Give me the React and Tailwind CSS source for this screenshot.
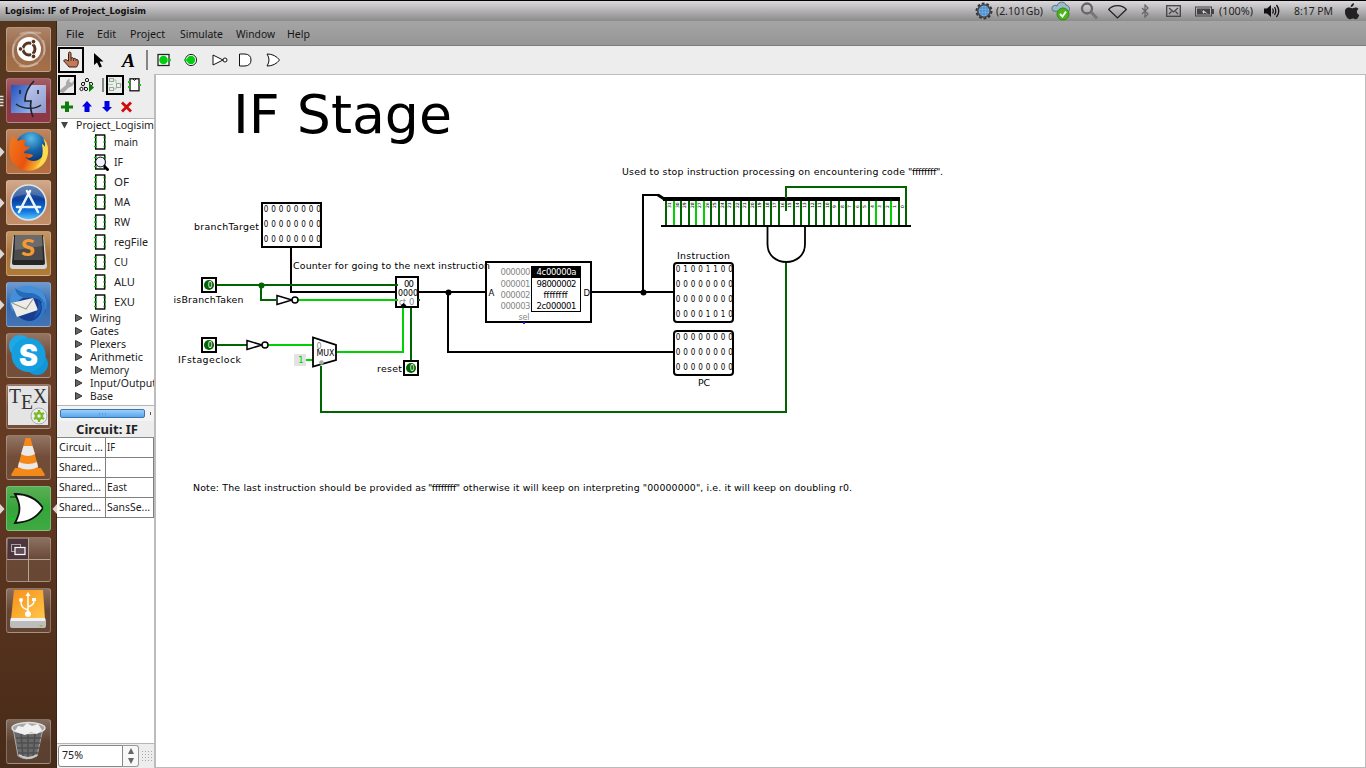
import React from "react";

/* ---------- dock ---------- */

function Tile({ bg, left, right, children }) {
  return (
    <div className="flex h-[45px] w-[57px] shrink-0 items-center">
      <div className="flex w-[6px] justify-start">
        {left === "arrow" && (
          <svg width="5" height="10" viewBox="0 0 5 10"><path d="M0 0L4.5 5L0 10Z" fill="#ddd8d3" /></svg>
        )}
        {left === "bars" && (
          <svg width="5" height="12" viewBox="0 0 5 12"><path d="M0 1.5H3.5M0 4.5H3.5M0 7.5H3.5M0 10.5H3.5" stroke="#e4e0dc" strokeWidth="1.6" /></svg>
        )}
      </div>
      <div className={`h-[45px] w-[45px] overflow-hidden rounded-[3px] border border-white/25 bg-linear-to-b ${bg}`}>{children}</div>
      <div className="flex w-[6px] justify-end">
        {right && (
          <svg width="5" height="10" viewBox="0 0 5 10"><path d="M5 0L0.5 5L5 10Z" fill="#ddd8d3" /></svg>
        )}
      </div>
    </div>
  );
}

const Art = ({ children }) => (
  <svg width="43" height="43" viewBox="0 0 43 43" className="block">{children}</svg>
);

const CLEAR = "from-white/30 via-white/10 to-white/10";

function Dock() {
  return (
    <aside className="flex w-[57px] shrink-0 flex-col gap-[6px] border-r border-[#3a2414] bg-linear-to-b from-[#54361f] via-[#683c24] to-[#482b19] pt-[6px]">
      <Tile bg="from-[#ad8468] via-[#98694a] to-[#a77047]">
        <Art>
          <g fill="none" stroke="#fff" strokeOpacity=".28" strokeWidth="2">
            <path d="M7 30C2 12 16 2 34 5" /><path d="M36 12C42 28 30 41 12 38" /><path d="M13 6C28 0 40 12 37 27" /><path d="M31 35C14 44 2 32 7 16" />
          </g>
          <circle cx="22" cy="21" r="12" fill="#fff" />
          <circle cx="22" cy="21" r="6" fill="none" stroke="#59351f" strokeWidth="3" />
          <path d="M22 21L12 21M22 21L27 12.5M22 21L27 29.5" stroke="#fff" strokeWidth="1.2" />
          <g fill="#59351f" stroke="#fff" strokeWidth=".9"><circle cx="13.5" cy="21" r="2.3" /><circle cx="26.5" cy="13.6" r="2.3" /><circle cx="26.5" cy="28.4" r="2.3" /></g>
        </Art>
      </Tile>
      <Tile bg="from-[#a65d66] via-[#8a3744] to-[#8d3846]" left="bars">
        <Art>
          <defs>
            <linearGradient id="fl" x1="0" y1="0" x2="1" y2="1"><stop offset="0" stopColor="#2450bd" /><stop offset="1" stopColor="#98b8ec" /></linearGradient>
            <linearGradient id="fr" x1="0" y1="0" x2="1" y2="1"><stop offset="0" stopColor="#c7d6f5" /><stop offset="1" stopColor="#8d97cc" /></linearGradient>
          </defs>
          <rect x="4" y="6" width="35" height="28" fill="url(#fr)" />
          <path d="M4 6H24C20 12 18 17 18 22H24L25 34H4Z" fill="url(#fl)" />
          <path d="M27 2C20 9 18 16 18 22H24C23 27 24 33 26 38" fill="none" stroke="#20242f" strokeWidth="1.7" />
          <path d="M9 25C15 30 28 31 34 26M13 11V15M31 11V15" fill="none" stroke="#20242f" strokeWidth="1.6" />
        </Art>
      </Tile>
      <Tile bg="from-[#bd8760] via-[#af6c41] to-[#b66f40]" left="arrow">
        <Art>
          <defs>
            <radialGradient id="globe" cx=".5" cy=".2" r=".8"><stop offset="0" stopColor="#58bce8" /><stop offset=".5" stopColor="#1763a7" /><stop offset="1" stopColor="#0a2c66" /></radialGradient>
            <linearGradient id="fox" x1="0" y1="0" x2="1" y2=".4"><stop offset="0" stopColor="#f47a1c" /><stop offset=".6" stopColor="#e8540f" /><stop offset="1" stopColor="#fcd03c" /></linearGradient>
          </defs>
          <circle cx="24" cy="18" r="16" fill="url(#globe)" />
          <path d="M5 7C8 7 10 9 11 11C14 9 18 10 20 10C17 12 17 14 18 16C20 17 22 16 23 17C22 20 17 20 17 23C20 24 22 23 26 25C24 29 20 28 18 27C21 31 29 33 34 28C38 24 36 18 35 14C37 15 38 17 38 18C39 14 37 10 36 8C42 13 43 24 38 32C31 43 15 43 8 35C1 28 1 16 5 7Z" fill="url(#fox)" />
          <path d="M35 14C37 15 38 17 38 18C39 14 37 10 36 8C42 13 42 24 38 31C35 35 32 37 28 38C35 33 37 23 35 14Z" fill="#fbdc4e" />
        </Art>
      </Tile>
      <Tile bg="from-[#d0a98c] via-[#bd8660] to-[#c38f69]" left="arrow">
        <Art>
          <defs><linearGradient id="as" x1="0" y1="0" x2="0" y2="1"><stop offset="0" stopColor="#4c6d97" /><stop offset=".4" stopColor="#0b3f9b" /><stop offset=".75" stopColor="#1277df" /><stop offset="1" stopColor="#5dcdfb" /></linearGradient></defs>
          <circle cx="21.500" cy="21.500" r="17.500" fill="url(#as)" stroke="#dbe4ec" strokeWidth="1.6" />
          <path d="M20 10L31 31M23 10L12 31M10 26H17M19 26H33" stroke="#e9f4ff" strokeWidth="2.6" strokeLinecap="round" />
          <path d="M5 18C12 12 31 12 38 18C35 0 8 0 5 18Z" fill="#fff" opacity=".18" />
        </Art>
      </Tile>
      <Tile bg="from-[#c39866] via-[#a8723a] to-[#b07b35]" left="arrow">
        <Art>
          <path d="M6 5L3 34Q3 37 6 37H37Q40 37 40 34L37 5Z" fill="#d6d6d6" />
          <path d="M7 3H36L38 31Q38 33 36 33H7Q5 33 5 31Z" fill="#252525" />
          <path d="M8 3H35L36 28H7Z" fill="#4b4b4b" /><path d="M8 3H35L35.500 14L8 18Z" fill="#6b6b6b" />
          <text x="14" y="24" fontFamily="Lato, sans-serif" fontWeight="900" fontSize="22" fill="#f59a31" textLength="14" lengthAdjust="spacingAndGlyphs">S</text>
        </Art>
      </Tile>
      <Tile bg="from-[#6c9bd0] via-[#3469ac] to-[#4374b5]" left="arrow">
        <Art>
          <circle cx="23" cy="21" r="17" fill="#173e91" />
          <path d="M4 12C8 4 18 1 28 4C37 7 42 17 39 28C37 20 31 12 22 13C13 14 6 22 6 29C3 24 2 18 4 12Z" fill="#448fd8" />
          <path d="M8 5C13 9 17 10 24 10C31 11 36 15 38 22C34 16 27 14 18 15C13 14 9 11 8 5Z" fill="#276bb8" />
          <path d="M4 20L26 15L31 27L10 34Z" fill="#eeece7" /><path d="M5 20L19 26L26 16" fill="none" stroke="#9e9991" strokeWidth="1.2" />
          <path d="M34 20C37 29 31 38 20 39C32 42 41 31 38 19Z" fill="#2f78c8" />
          <path d="M31 16C36 22 35 32 26 35C31 29 32 22 31 16Z" fill="#1d55a8" />
        </Art>
      </Tile>
      <Tile bg={CLEAR}>
        <Art>
          <circle cx="13" cy="12" r="11" fill="#20a8e4" /><circle cx="30" cy="30" r="11" fill="#1196d8" /><circle cx="21.500" cy="21" r="17" fill="#169fdf" />
          <text x="12" y="32" fontFamily="Inter, sans-serif" fontWeight="900" fontSize="30" fill="#fff" textLength="19" lengthAdjust="spacingAndGlyphs">S</text>
        </Art>
      </Tile>
      <Tile bg={CLEAR}>
        <Art>
          <rect x="1" y="1" width="40" height="39" fill="#e4e4e4" />
          <text x="2" y="18" fontFamily="Liberation Serif, serif" fontSize="20" fill="#333" textLength="12" lengthAdjust="spacingAndGlyphs">T</text>
          <text x="14" y="24" fontFamily="Liberation Serif, serif" fontSize="20" fill="#333" textLength="12" lengthAdjust="spacingAndGlyphs">E</text>
          <text x="26" y="18" fontFamily="Liberation Serif, serif" fontSize="20" fill="#333" textLength="14" lengthAdjust="spacingAndGlyphs">X</text>
          <circle cx="32" cy="31" r="8" fill="#efefef" stroke="#aaa" />
          <circle cx="32" cy="31" r="3" fill="none" stroke="#7cb928" strokeWidth="2.500" />
          <path d="M32 25V28M32 34V37M27 28L29.500 29.500M34.500 32.500L37 34M27 34L29.500 32.500M34.500 29.500L37 28" stroke="#7cb928" strokeWidth="2.400" />
        </Art>
      </Tile>
      <Tile bg={CLEAR}>
        <Art>
          <path d="M8 32H34L38 39Q38 40 36 40H6Q4 40 4 39Z" fill="#f28a1b" />
          <path d="M18.500 2H23.500L32 34Q21 39 10 34Z" fill="#f68719" />
          <path d="M16.500 10H25.500L28 18Q21 22 14 18ZM12 26Q21 30 30 26L31 31Q21 36 11 31Z" fill="#eaeaea" />
        </Art>
      </Tile>
      <Tile bg="from-[#5aae55] via-[#35a53a] to-[#40a943]" left="arrow" right>
        <Art>
          <path d="M3 10H10" stroke="#155d19" strokeWidth="1.500" /><path d="M3 32H10" stroke="#07d21a" strokeWidth="1.500" />
          <path d="M8 7C22 7 30 12 36 21C30 30 23 35 8 36C14 25 14 18 8 7Z" fill="#fff" stroke="#111" strokeWidth="1.800" />
          <path d="M36 21H40" stroke="#07d21a" strokeWidth="1.500" />
        </Art>
      </Tile>
      <Tile bg={CLEAR}>
        <Art>
          <rect x="1" y="1" width="20" height="20" fill="#4d3540" />
          <path d="M21.500 0V43M0 21.500H43" stroke="#b7a496" strokeWidth="1" />
          <rect x="4.500" y="6.500" width="9" height="7" fill="none" stroke="#aaa1a4" />
          <rect x="8" y="9.500" width="10" height="7" fill="#604b55" stroke="#fff" strokeWidth="1.200" />
        </Art>
      </Tile>
      <Tile bg={CLEAR}>
        <Art>
          <defs><linearGradient id="usb" x1="0" y1="0" x2="1" y2="1"><stop offset="0" stopColor="#f78e19" /><stop offset="1" stopColor="#ffc84a" /></linearGradient></defs>
          <path d="M7 1H36L38 30H4Z" fill="url(#usb)" /><rect x="3" y="29" width="36" height="10" rx="2" fill="#bdbdbd" /><path d="M4 29H38V32H4Z" fill="#f2f2f2" />
          <path d="M21 7V25M21 21C15 19 14 17 14 12M21 18C26 16 27 15 27 11" fill="none" stroke="#fff" strokeWidth="1.500" />
          <circle cx="21" cy="25" r="3" fill="#fff" /><circle cx="14" cy="11" r="2" fill="#fff" /><rect x="25" y="9" width="4" height="3" fill="#fff" /><path d="M21 3L23.500 7H18.500Z" fill="#fff" />
          <path d="M32 36L34 38L36 36Z" fill="#9fb43a" />
        </Art>
      </Tile>
      <div className="mt-auto mb-[4px]">
        <Tile bg={CLEAR}>
          <Art>
            <path d="M6 8L11 36Q20 42 30 36L36 8Z" fill="#696969" stroke="#aaa" />
            <path d="M9 18H34M10 23H33M10 28H33M11 33H32M14 13L16 38M21 13V40M28 13L26 38" stroke="#4f4f4f" strokeWidth="1.500" />
            <ellipse cx="21.500" cy="8" rx="16.500" ry="5.500" fill="#a8a8a8" stroke="#e0e0e0" strokeWidth="1.500" />
            <path d="M8 11L11 6L16 7L20 3L25 6L31 4L35 10L30 14L24 12L18 15L12 13Z" fill="#f1f1f1" />
            <path d="M12 35Q21 41 30 35" fill="none" stroke="#ccc" strokeWidth="2" />
          </Art>
        </Tile>
      </div>
    </aside>
  );
}

/* ---------- top panel ---------- */

function FitText({ children, w, h = 16, y = 12, size = 11.5, font = "Noto Sans", weight = "400", fill = "#222" }) {
  return (
    <svg width={w} height={h} className="block shrink-0 overflow-visible">
      <text x="0" y={y} fontFamily={`${font}, sans-serif`} fontSize={size} fontWeight={weight} fill={fill} textLength={w} lengthAdjust="spacingAndGlyphs">{children}</text>
    </svg>
  );
}

function TopPanel() {
  return (
    <header className="flex h-[21px] shrink-0 items-center border-t border-black bg-linear-to-b from-[#dcd9dc] to-[#8b8b8b] pl-[5px]">
      <FitText w={141} size={9} font="DejaVu Sans" weight="700" fill="#111" y={11}>Logisim: IF of Project_Logisim</FitText>
      <div className="ml-auto flex h-[20px] items-center">
        <svg width="18" height="18" viewBox="0 0 18 18" className="mr-[3px]">
          <circle cx="9" cy="9" r="7.500" fill="none" stroke="#333" strokeWidth="2" strokeDasharray="2.700 2" />
          <circle cx="9" cy="9" r="6.200" fill="#79b4e6" stroke="#444" strokeWidth="1.600" />
          <path d="M3 9H15M4 6H14M4 12H14M9 3V15M6 4V14M12 4V14" stroke="#3976b6" strokeWidth=".6" />
        </svg>
        <div className="w-[55px]"><FitText w={47} y={11.5}>(2.101Gb)</FitText></div>
        <svg width="20" height="20" viewBox="0 0 20 20" className="mr-[9px]">
          <path d="M2 10C-1 6 3 3 6 5C7 0 14 0 15 4C20 5 19 11 16 11Z" fill="#9cb8ca" stroke="#527387" />
          <circle cx="12" cy="13" r="6" fill="#4cb51b" stroke="#318e10" /><path d="M9 13L11.500 15.500L15 10.500" stroke="#fff" strokeWidth="1.800" fill="none" />
        </svg>
        <svg width="18" height="18" viewBox="0 0 18 18" className="mr-[10px]"><circle cx="7" cy="6.500" r="5" fill="none" stroke="#666" strokeWidth="2.300" /><path d="M11 10L17 16.500" stroke="#777" strokeWidth="3" /></svg>
        <svg width="19" height="15" viewBox="0 0 19 15" className="mr-[14px]"><path d="M.7 5.500C5 .2 14 .2 18.300 5.500L9.500 14Z" fill="none" stroke="#222" strokeWidth="1.200" /></svg>
        <svg width="8" height="14" viewBox="0 0 8 14" className="mr-[17px]"><path d="M1 4L7 10L4 13V1L7 4L1 10" fill="none" stroke="#666" strokeWidth="1.200" /></svg>
        <svg width="15" height="12" viewBox="0 0 15 12" className="mr-[14px]"><rect x=".7" y=".7" width="13.600" height="10.600" fill="none" stroke="#444" strokeWidth="1.300" /><path d="M3 3L7.500 7L12 3M3 9L5.500 6.500M12 9L9.500 6.500" fill="none" stroke="#444" strokeWidth="1.200" /></svg>
        <svg width="19" height="11" viewBox="0 0 19 11" className="mr-[5px]"><rect x=".5" y="1" width="16" height="9" fill="none" stroke="#444" /><rect x="2" y="2.500" width="13" height="6" fill="#444" /><rect x="17" y="3" width="2" height="5" fill="#444" /><path d="M5 3L8 6V4L13 8L9 6.500V8Z" fill="#ddd" /></svg>
        <div className="w-[45px]"><FitText w={34} y={11.5}>(100%)</FitText></div>
        <svg width="16" height="14" viewBox="0 0 16 14" className="mr-[14px]"><path d="M0 4.500H3L7 1V13L3 9.500H0Z" fill="#111" /><path d="M8.500 4.500Q10 7 8.500 9.500M10.500 3Q13 7 10.500 11M12.500 1Q17 7 12.500 13" fill="none" stroke="#111" strokeWidth="1.300" /></svg>
        <div className="w-[51px]"><FitText w={39} y={11.5}>8:17 PM</FitText></div>
        <svg width="15" height="17" viewBox="0 0 15 17" className="mr-[6px]"><path d="M9 0C9 2.500 7.500 4 5.700 4C5.700 2 7 .5 9 0ZM13.600 6C11 7.500 11.500 11 14.300 12C13 15.500 11.500 17 9.500 16C8 15.300 7 15.500 5.500 16.200C2 17.500-3 7.500 2 5C4.500 3.900 5.500 5.300 7 5.300C8.500 5.200 11 3 13.600 6Z" fill="#222" /></svg>
      </div>
    </header>
  );
}

const MENUS = [["File", 18, "w-[31px]"], ["Edit", 19, "w-[33px]"], ["Project", 35, "w-[50px]"], ["Simulate", 43, "w-[56px]"], ["Window", 39, "w-[51px]"], ["Help", 23, "w-[40px]"]];

function MenuBar() {
  return (
    <nav className="flex h-[25px] shrink-0 items-center border-b border-[#7c7c7c] bg-linear-to-b from-[#a5a5a5] to-[#969696] pl-[9px]">
      {MENUS.map(([t, w, cls]) => (
        <div key={t} className={cls}><FitText w={w} size={11.5} y={12.5} fill="#161616">{t}</FitText></div>
      ))}
    </nav>
  );
}

/* ---------- toolbars ---------- */

function ToolBar() {
  return (
    <div className="flex h-[28px] shrink-0 items-center bg-[#ededed] pl-[1px]">
      <div className="flex h-[26px] w-[26px] items-center justify-center border-2 border-black">
        <svg width="18" height="18" viewBox="0 0 18 18"><path d="M6.500 10V2.500Q6.500 1 7.700 1T9 2.500V7Q11 6 11.500 7.500Q13.500 6.700 14 8.500Q16 8 16.200 10V12Q16 14.500 14.500 16H7Q5 13 2.500 11Q1 9.500 2.500 8.800Q4.500 8.300 6.500 10Z" fill="#c27a5c" stroke="#3d1e14" /><path d="M9 7V10M11.500 7.500V10M14 8.500V10" stroke="#3d1e14" strokeWidth=".8" /></svg>
      </div>
      <svg width="11" height="16" viewBox="0 0 11 16" className="ml-[9px]"><path d="M1 1V13L4 10.500L6.500 15.500L9 14.500L6.500 9.500H10.500Z" fill="#000" /></svg>
      <svg width="16" height="22" viewBox="0 0 16 22" className="ml-[18px] overflow-visible"><text x="0" y="18" fontFamily="Liberation Serif, serif" fontWeight="700" fontStyle="italic" fontSize="18" textLength="13" lengthAdjust="spacingAndGlyphs">A</text></svg>
      <div className="ml-[8px] h-[20px] w-[2px] bg-[#858585]" />
      <svg width="135" height="20" viewBox="0 0 135 20" className="ml-[9px]">
        <rect x="1" y="4.500" width="11" height="11" fill="#fff" stroke="#222" strokeWidth="1.300" /><circle cx="6.500" cy="10" r="4.300" fill="#00cf10" /><circle cx="12.500" cy="10" r="1.500" fill="#00cf10" />
        <circle cx="34" cy="10" r="5.600" fill="#fff" stroke="#222" /><circle cx="34" cy="10" r="4.200" fill="#00cf10" /><circle cx="28.500" cy="10" r="1.500" fill="#00cf10" />
        <path d="M56 5V15L66 10Z" fill="#fff" stroke="#111" /><circle cx="68" cy="10" r="2" fill="#fff" stroke="#111" />
        <path d="M82.500 4H88Q94 4.500 94 10T88 16H82.500Z" fill="#fff" stroke="#111" />
        <path d="M110 4Q118 4 122.500 10Q118 16 110 16Q114 10 110 4Z" fill="#fff" stroke="#111" />
      </svg>
    </div>
  );
}

function ExplorerTools() {
  return (
    <div className="flex h-[44px] shrink-0 flex-col bg-[#ededed]">
      <div className="flex h-[22px] items-center pl-[1px]">
        <div className="flex h-[20px] w-[18px] items-center justify-center border-2 border-black">
          <svg width="14" height="16" viewBox="0 0 14 16"><path d="M0 13L6 8Q5.500 3.500 9.500 1.500L9.500 5L12 6L14 3Q15 9 9 10.500L3 16L0 15Z" fill="#a9a9a9" /></svg>
        </div>
        <svg width="17" height="16" viewBox="0 0 17 16" className="ml-[3px]"><path d="M8 3L4 7L2 12M8 3L12 7M4 7L6 12" fill="none" stroke="#111" strokeDasharray="2 1" /><g fill="#fff" stroke="#111"><circle cx="8" cy="3" r="1.600" /><circle cx="4" cy="7" r="1.600" /><circle cx="2.500" cy="12" r="1.600" /><circle cx="7" cy="12" r="1.600" /><circle cx="12" cy="7" r="1.600" /></g><path d="M10 6V15L15 10.500Z" fill="#087b08" /></svg>
        <div className="ml-[6px] h-[14px] w-[2px] bg-[#858585]" />
        <div className="ml-[2px] flex h-[20px] w-[18px] shrink-0 items-center justify-center border-2 border-black">
          <svg width="14" height="14" viewBox="0 0 14 14" className="shrink-0"><g fill="none" stroke="#a3a3a3"><rect x="1.500" y=".5" width="4" height="3" /><rect x="1.500" y="9.500" width="4" height="3" /><rect x="8.500" y="5.500" width="4" height="4" /></g><path d="M6 2H8V5M6 11H8V9M12.500 7H14M0 6.500H5" stroke="#8fd68f" fill="none" /></svg>
        </div>
        <svg width="14" height="14" viewBox="0 0 14 14" className="ml-[4px]"><rect x="2" y=".8" width="9" height="12" fill="#fff" stroke="#111" strokeWidth="1.300" /><path d="M5 1Q6.500 4 8 1" fill="none" stroke="#111" /><path d="M0 4H2M0 9H2M11 7H13" stroke="#00cc00" strokeWidth="2" /></svg>
      </div>
      <svg width="80" height="20" viewBox="0 0 80 20" className="ml-[1px]">
        <path d="M7 5.500H11V9.500H15V12.500H11V16H7V12.500H3V9.500H7Z" fill="#0c7c0c" />
        <path d="M29 5L34 10.500H31.500V16H26.500V10.500H24Z" fill="#0000e4" /><path d="M49 16L54 11H51.500V5H46.500V11H44Z" fill="#0000e4" />
        <path d="M64 6.500L73 15.500M73 6.500L64 15.500" stroke="#d00b0b" strokeWidth="2.800" />
      </svg>
    </div>
  );
}

/* ---------- explorer ---------- */

const CIRCUITS = [["main", 24], ["IF", 9], ["OF", 15], ["MA", 16], ["RW", 16], ["regFile", 34], ["CU", 14], ["ALU", 21], ["EXU", 21]];
const LIBS = [["Wiring", 31], ["Gates", 29], ["Plexers", 36], ["Arithmetic", 53], ["Memory", 39], ["Input/Output", 66], ["Base", 23]];

function Explorer() {
  return (
    <div className="flex h-[288px] shrink-0 flex-col overflow-hidden border-y border-[#b5b5b5] bg-white">
      <div className="flex h-[13px] shrink-0 items-center pl-[4px]">
        <svg width="7" height="7" viewBox="0 0 7 7" className="mr-[8px] shrink-0"><path d="M0 0H7L3.500 6.500Z" fill="#444" /></svg>
        <FitText w={78} h={13} y={9.5}>Project_Logisim</FitText>
      </div>
      {CIRCUITS.map(([t, w]) => (
        <div key={t} className="flex h-[20px] shrink-0 items-center pl-[36px]">
          <svg width="16" height="18" viewBox="0 0 16 18" className="mr-[5px]">
            <rect x="2.700" y="2" width="9" height="14" fill="#fff" stroke="#000" strokeWidth="1.400" />
            <path d="M1 4.500H4M1 9H4M1 13.500H4" stroke="#00c400" strokeWidth="1.500" />
            <path d="M10.500 4.500H13M10.500 9H13M10.500 13.500H13" stroke="#078a07" strokeWidth="1.500" />
            {t === "IF" && <><circle cx="7.500" cy="9" r="4.900" fill="#f0f0ff" stroke="#111" /><path d="M11 13L15.500 17.500" stroke="#000" strokeWidth="2.800" /></>}
          </svg>
          <FitText w={w} y={12}>{t}</FitText>
        </div>
      ))}
      {LIBS.map(([t, w]) => (
        <div key={t} className="flex h-[13px] shrink-0 items-center pl-[18px]">
          <svg width="8" height="8" viewBox="0 0 8 8" className="mr-[7px] shrink-0 -translate-y-px"><path d="M.5 .5L7 4L.5 7.500Z" fill="#666" stroke="#333" /></svg>
          <FitText w={w} h={13} y={9.5}>{t}</FitText>
        </div>
      ))}
    </div>
  );
}

const ATTRS = [["Circuit ...", 44, "IF", 8], ["Shared...", 42, "", 0], ["Shared...", 42, "East", 20], ["Shared...", 42, "SansSe...", 43]];

function LeftPanel() {
  return (
    <section className="flex w-[99px] shrink-0 flex-col border-r-2 border-[#bcbcbc] bg-white">
      <ExplorerTools />
      <Explorer />
      <div className="flex h-[15px] shrink-0 items-center bg-[#f4f4f4] pl-[3px]">
        <div className="flex h-[9px] w-[85px] items-center justify-center rounded-[2px] border border-[#3c74ae] bg-linear-to-b from-[#9bcffa] to-[#5aa6ee]">
          <svg width="8" height="2"><path d="M0 1H8" stroke="#4381be" strokeDasharray="1 2" /></svg>
        </div>
        <div className="ml-[5px] h-[3px] w-[1px] bg-[#555]" />
      </div>
      <div className="flex h-[17px] shrink-0 items-center justify-center border-b border-[#888] bg-[#ededed] pl-[2px]">
        <FitText w={62} size={12.5} weight="700" y={12.5}>Circuit: IF</FitText>
      </div>
      <div className="flex shrink-0 flex-col">
        {ATTRS.map(([a, aw, b, bw], i) => (
          <div key={i} className="flex h-[20px] border-b border-[#808080]">
            <div className="flex w-[49px] items-center border-r border-[#808080] pl-[2px]"><FitText w={aw} y={11}>{a}</FitText></div>
            <div className="flex w-[48px] items-center border-r border-[#808080] pl-[1px]">{b && <FitText w={bw} y={11}>{b}</FitText>}</div>
          </div>
        ))}
      </div>
      <div className="mt-auto flex h-[25px] shrink-0 items-center border-t border-[#b5b5b5] bg-[#ededed] pl-[1px]">
        <div className="flex h-[22px] w-[65px] items-center rounded-l-[3px] border border-[#888] bg-white pl-[3px]"><FitText w={21} y={11}>75%</FitText></div>
        <div className="flex h-[22px] w-[16px] flex-col items-center justify-center gap-[4px] rounded-r-[3px] border border-l-0 border-[#999] bg-[#f8f8f8]">
          <svg width="6" height="6"><path d="M0 6L3 0L6 6Z" fill="#666" /></svg>
          <svg width="6" height="6"><path d="M0 0L3 6L6 0Z" fill="#666" /></svg>
        </div>
        <svg width="12" height="12" className="ml-[3px]">
          {[1, 4, 7, 10].map((y) => <path key={y} d={`M0 ${y}.5H12`} stroke="#aaa" strokeDasharray="1 2" />)}
        </svg>
      </div>
    </section>
  );
}

/* ---------- circuit ---------- */

const ON = "#00d200";
const OFF = "#006400";

const T = ({ x, y, w, s = 9.4, c = "#000", adjust = "spacing", children }) => (
  <text x={x} y={y} fontSize={s} fill={c} textLength={w} lengthAdjust={adjust} fontFamily="DejaVu Sans, sans-serif">{children}</text>
);
const Wire = ({ d, c = "#000", w = 2 }) => <path d={d} fill="none" stroke={c} strokeWidth={w} shapeRendering="crispEdges" />;

function Bits({ x, y, rows }) {
  return rows.map((r, i) => (
    <g key={i}>{r.split("").map((b, j) => (
      <text key={j} x={x + j * 7.5 - 2.3} y={y + i * 15} fontSize="8.5" textLength="4.6" lengthAdjust="spacingAndGlyphs" fontFamily="DejaVu Sans, sans-serif">{b}</text>
    ))}</g>
  ));
}

function Pin({ x, y }) {
  return (
    <g>
      <rect x={x - 7} y={y - 7} width="14" height="14" fill="#fff" stroke="#000" strokeWidth="2" shapeRendering="crispEdges" />
      <circle cx={x} cy={y} r="5" fill={OFF} />
      <text x={x - 1.2} y={y + 3} fontSize="8" textLength="4.6" lengthAdjust="spacingAndGlyphs" fill="#fff" fontFamily="DejaVu Sans, sans-serif">0</text>
    </g>
  );
}

const Not = ({ x, y }) => (
  <g fill="#fff" stroke="#000" strokeWidth="1.5">
    <path d={`M${x} ${y - 4.500}V${y + 4.500}L${x + 15} ${y}Z`} /><circle cx={x + 18} cy={y} r="3" />
  </g>
);

const LIT = [1, 4, 5, 28, 30];
const ROM = [["000000", "4c00000a"], ["000001", "98000002"], ["000002", "ffffffff"], ["000003", "2c000001"]];

function Circuit() {
  return (
    <svg width="1209" height="692" viewBox="156 75 1209 692" className="block">
      <T x={233} y={133} w={219} s={53} adjust="spacingAndGlyphs">IF Stage</T>
      <T x={622} y={175} w={283}>Used to stop instruction processing on encountering code</T>
      <T x={908} y={175} w={35}>"ffffffff".</T>
      <T x={193} y={491} w={233}>Note: The last instruction should be provided as</T>
      <T x={428} y={491} w={32}>"ffffffff"</T>
      <T x={463} y={491} w={389}>otherwise it will keep on interpreting "00000000", i.e. it will keep on doubling r0.</T>

      <rect x="262" y="203" width="59" height="44" fill="#fff" stroke="#000" strokeWidth="2" shapeRendering="crispEdges" />
      <Bits x={266} y={212} rows={["00000000", "00000000", "00000000"]} />
      <T x={194} y={230} w={65}>branchTarget</T>
      <Wire d="M291 248V292H396" />
      <T x={293} y={269} w={197}>Counter for going to the next instruction</T>

      <Wire d="M217 285H397M261 285V300H276" c={OFF} />
      <circle cx="261.500" cy="285.500" r="3" fill={OFF} />
      <Pin x={209} y={285} />
      <T x={173.500} y={303} w={70}>isBranchTaken</T>
      <Wire d="M298 300H396" c={ON} />
      <Not x={277} y={300} />

      <Wire d="M217 345H247" c={OFF} />
      <Pin x={209} y={345} />
      <T x={178} y={363} w={63}>IFstageclock</T>
      <Wire d="M267 345H313M337 352H403V308" c={ON} />
      <Not x={247} y={345} />
      <rect x="294" y="354" width="12" height="12" fill="#e3e3e3" />
      <T x={298} y={363} w={5} s={9} c={ON}>1</T>
      <Wire d="M306 360H313" c={ON} />
      <Wire d="M321 366V412H786V263" c={OFF} />
      <path d="M313 337.500V366.500L336 360V345Z" fill="#fff" stroke="#000" strokeWidth="1.800" />
      <T x={316.500} y={348.500} w={5} s={8} c="#888">0</T>
      <T x={316.500} y={356} w={18} s={8.500} adjust="spacingAndGlyphs">MUX</T>
      <circle cx="321.500" cy="362.500" r="2.300" fill="#aaa" />

      <rect x="396" y="277" width="22" height="30" fill="#fff" stroke="#000" strokeWidth="2" shapeRendering="crispEdges" />
      <T x={404} y={287} w={10} s={8.500}>00</T>
      <T x={398} y={296} w={20} s={8.500} adjust="spacingAndGlyphs">0000</T>
      <T x={399} y={305} w={7} s={8.500} c="#888" adjust="spacingAndGlyphs">ct</T>
      <T x={409} y={305} w={5} s={8.500} c="#888">0</T>
      <Wire d="M395 285H398M418 300H420" c={OFF} />
      <Wire d="M395 300H398" c={ON} />
      <path d="M400.500 306L403.500 303L406.500 306Z" />
      <Wire d="M411 308V361" c={OFF} />
      <Pin x={411} y={368} />
      <T x={377} y={372} w={25}>reset</T>

      <Wire d="M419 292H486M448 292V352H674M592 292H674M643 292V195H659" />
      <circle cx="448.500" cy="292.500" r="3" /><circle cx="643.500" cy="292.500" r="3" />
      <path d="M658 195L665 199.500" stroke="#000" strokeWidth="3" />
      <Wire d="M663 199H900" w={4} />

      <rect x="486" y="262" width="105" height="60" fill="none" stroke="#000" strokeWidth="2" shapeRendering="crispEdges" />
      <T x={488.500} y={296} w={6} s={8.500}>A</T>
      <T x={583.500} y={296} w={6} s={8.500}>D</T>
      <rect x="531.500" y="266.500" width="49" height="45" fill="#fff" stroke="#000" shapeRendering="crispEdges" />
      <rect x="531" y="266" width="50" height="12" />
      {ROM.map(([a, v], i) => {
        const y = [275, 287, 298, 309][i];
        return (
          <g key={a}>
            <T x={500.500} y={y} w={30} s={8.500} c="#888">{a}</T>
            <T x={i === 2 ? 543.500 : 536.500} y={y} w={i === 2 ? 24 : 40} s={8.500}  c={i === 0 ? "#fff" : "#000"}>{v}</T>
          </g>
        );
      })}
      <T x={518.500} y={320} w={11} s={8} c="#888">sel</T>
      <rect x="523" y="322" width="2" height="2" fill="#2020ff" />

      {Array.from({ length: 32 }, (_, i) => {
        const x = Math.round(666 + i * 7.5);
        return (
          <g key={i}>
            <Wire d={`M${x} 201V${i === 16 ? 211 : 226}`} c={LIT.includes(i) ? ON : OFF} />
            <text transform={`translate(${x + 4.500} 208) rotate(-90)`} fontSize="4.5" fontFamily="DejaVu Sans, sans-serif">{31 - i}</text>
          </g>
        );
      })}
      <Wire d="M786 198V187H906V226" c={OFF} />
      <Wire d="M661 226H911" />
      <path d="M767.500 227V244C767.500 268 805 268 805 244V227" fill="#fff" stroke="#000" strokeWidth="1.800" />

      <rect x="674" y="263" width="59" height="59" rx="3" fill="#fff" stroke="#000" strokeWidth="2" />
      <Bits x={678} y={272} rows={["01001100", "00000000", "00000000", "00001010"]} />
      <T x={677} y={259} w={53}>Instruction</T>
      <rect x="674" y="331" width="59" height="44" rx="3" fill="#fff" stroke="#000" strokeWidth="2" />
      <Bits x={678} y={340} rows={["00000000", "00000000", "00000000"]} />
      <T x={698} y={386} w={12}>PC</T>
    </svg>
  );
}

export default function App() {
  return (
    <div className="flex h-[768px] w-[1366px] flex-col overflow-hidden bg-[#ededed]">
      <TopPanel />
      <div className="flex min-h-0 flex-1">
        <Dock />
        <div className="flex min-w-0 flex-1 flex-col">
          <MenuBar />
          <ToolBar />
          <div className="flex min-h-0 flex-1">
            <LeftPanel />
            <main className="flex-1 overflow-hidden border-t border-r border-b border-[#bcbcbc] bg-white"><Circuit /></main>
          </div>
        </div>
      </div>
    </div>
  );
}
